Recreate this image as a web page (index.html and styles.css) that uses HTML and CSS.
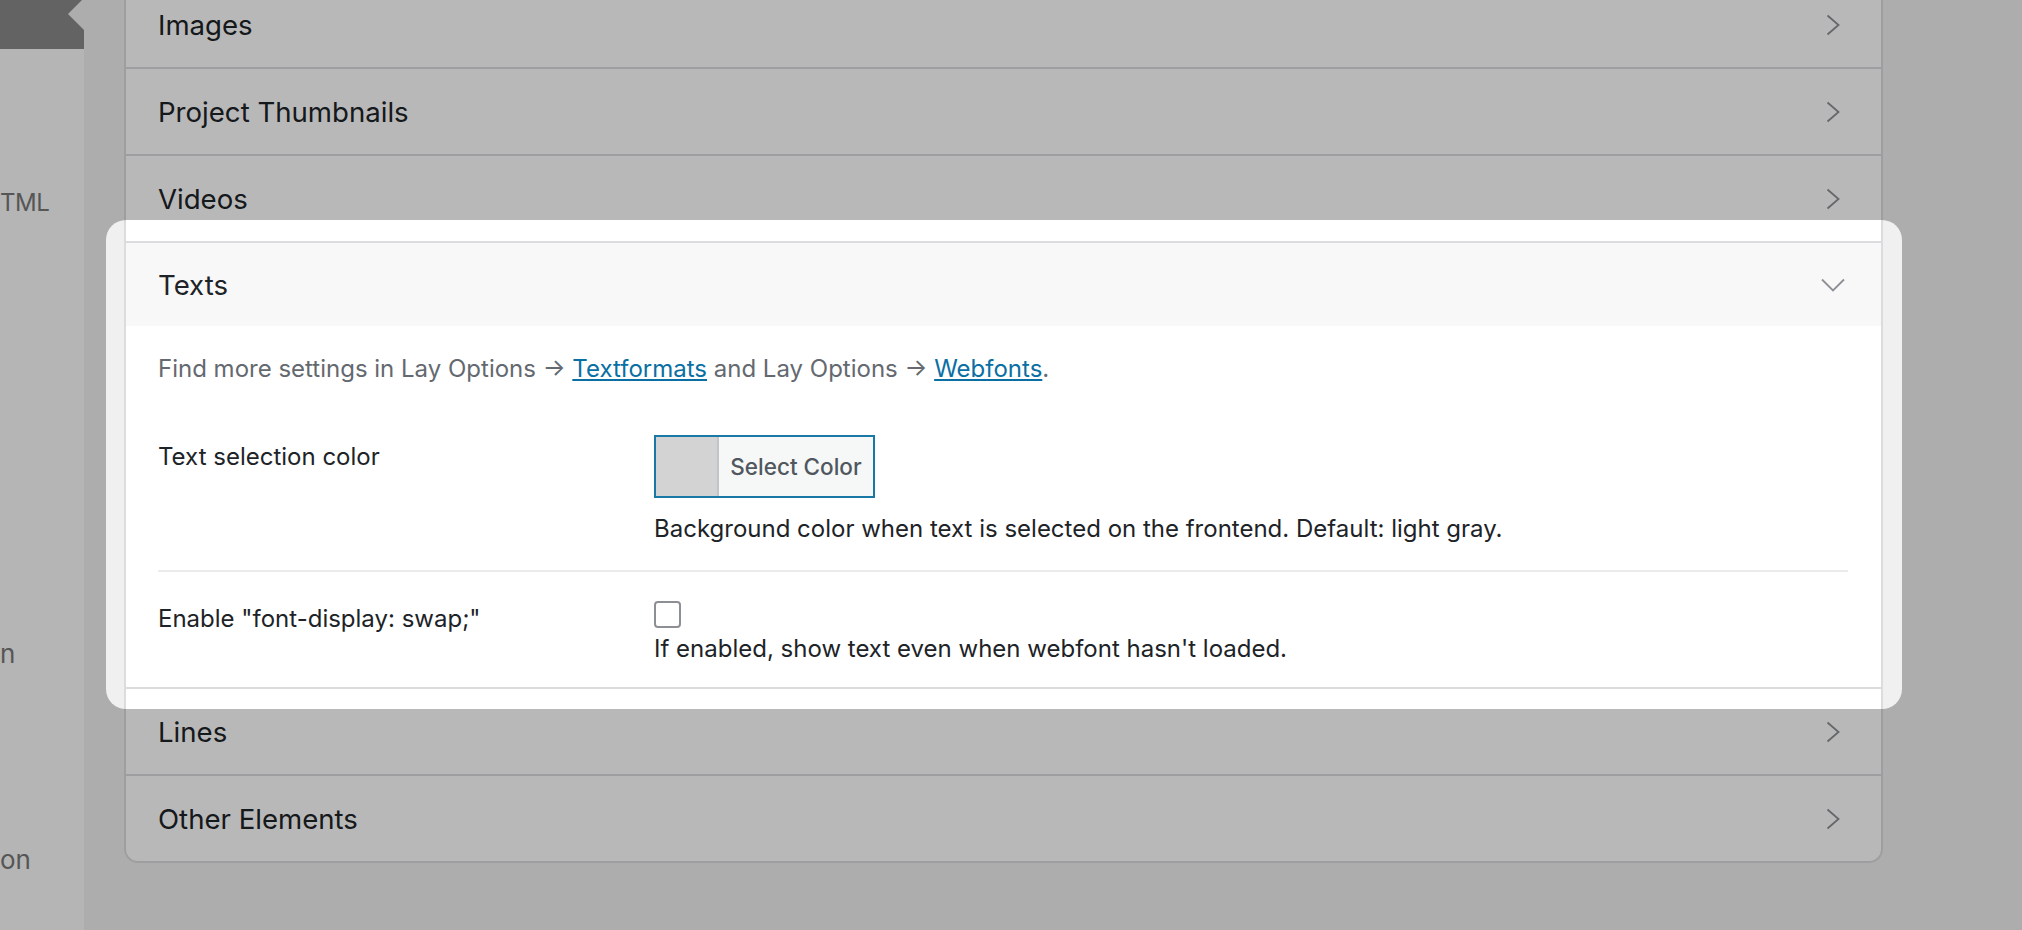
FILE: index.html
```html
<!DOCTYPE html>
<html lang="en">
<head>
    <meta charset="UTF-8">
    <meta name="viewport" content="width=device-width, initial-scale=1.0">
    <title>Lay Options</title>
    <link rel="stylesheet" href="styles.css">
</head>
<body>

    <div class="layout">
        <!-- Admin side menu (scrolled partly out of view) -->
        <aside class="sidebar">
            <div class="menu-current"></div>
            <ul class="menu">
                <li class="menu-item item-html">TML</li>
                <li class="menu-item item-design">n</li>
                <li class="menu-item item-option">on</li>
            </ul>
        </aside>

        <main class="main">
            <div class="card">
                <section class="panel">
                    <header class="panel-head">
                        <span>Images</span>
                        <svg class="chevron" viewBox="0 0 24 24"><path d="M6.5 2.5 L17.5 12 L6.5 21.5"/></svg>
                    </header>
                </section>
                <section class="panel">
                    <header class="panel-head">
                        <span>Project Thumbnails</span>
                        <svg class="chevron" viewBox="0 0 24 24"><path d="M6.5 2.5 L17.5 12 L6.5 21.5"/></svg>
                    </header>
                </section>
                <section class="panel">
                    <header class="panel-head">
                        <span>Videos</span>
                        <svg class="chevron" viewBox="0 0 24 24"><path d="M6.5 2.5 L17.5 12 L6.5 21.5"/></svg>
                    </header>
                </section>

                <!-- Open panel -->
                <section class="panel is-open">
                    <header class="panel-head">
                        <span>Texts</span>
                        <svg class="chevron" viewBox="0 0 24 24"><path d="M1 6.5 L12 17.5 L23 6.5"/></svg>
                    </header>
                    <div class="panel-body">
                        <p class="panel-note">Find more settings in Lay Options → <a href="#">Textformats</a> and Lay Options → <a href="#">Webfonts</a>.</p>

                        <div class="field">
                            <label class="field-label">Text selection color</label>
                            <div class="field-value">
                                <button type="button" class="color-button">
                                    <span class="color-swatch"></span>
                                    <span class="color-text">Select Color</span>
                                </button>
                                <p class="field-desc">Background color when text is selected on the frontend. Default: light gray.</p>
                            </div>
                        </div>

                        <div class="field">
                            <label class="field-label" for="fontSwap">Enable "font-display: swap;"</label>
                            <div class="field-value">
                                <input type="checkbox" id="fontSwap" class="checkbox">
                                <p class="field-desc field-desc-tight">If enabled, show text even when webfont hasn't loaded.</p>
                            </div>
                        </div>
                    </div>
                </section>

                <section class="panel">
                    <header class="panel-head">
                        <span>Lines</span>
                        <svg class="chevron" viewBox="0 0 24 24"><path d="M6.5 2.5 L17.5 12 L6.5 21.5"/></svg>
                    </header>
                </section>
                <section class="panel">
                    <header class="panel-head">
                        <span>Other Elements</span>
                        <svg class="chevron" viewBox="0 0 24 24"><path d="M6.5 2.5 L17.5 12 L6.5 21.5"/></svg>
                    </header>
                </section>
            </div>
        </main>
    </div>

    <!-- Tour highlight: dims everything except the open panel -->
    <div class="spotlight"></div>

</body>
</html>
```

FILE: styles.css
```css
/* Lay Options - settings page with tour highlight */
body {
    font-family: Inter, "Noto Sans", Arial, sans-serif;
    background-color: #f0f0f1;
    margin: 0;
    padding: 0;
    height: 930px;
    overflow: hidden;
    color: #1d2327;
}

.layout {
    display: flex;
    height: 100%;
}

/* Side menu */
.sidebar {
    width: 84px;
    flex-shrink: 0;
    background-color: #fbfbfb;
    overflow: hidden;
}

.menu-current {
    position: relative;
    height: 49px;
    background-color: #8a8a8a;
}

.menu-current::after {
    content: "";
    position: absolute;
    right: 0;
    top: -2px;
    border-top: 16px solid transparent;
    border-bottom: 16px solid transparent;
    border-right: 16px solid #f0f0f1;
}

.menu {
    list-style: none;
    margin: 0;
    padding: 0;
}

.menu-item {
    font-size: 26px;
    line-height: 40px;
    color: #787878;
    white-space: nowrap;
}

.item-html {
    margin-top: 134px;
    font-size: 24px;
    letter-spacing: -0.5px;
}

.item-design {
    margin-top: 411px;
}

.item-option {
    margin-top: 166px;
}

/* Main column */
.main {
    flex: 1;
    padding-left: 40px;
}

.card {
    width: 1759px;
    box-sizing: border-box;
    margin-top: -20px;
    background-color: #fff;
    border: 2px solid #dcdcde;
    border-radius: 14px;
    overflow: hidden;
}

.panel + .panel {
    border-top: 2px solid #dcdcde;
}

.panel-head {
    height: 85px;
    padding: 0 36px 0 32px;
    display: flex;
    align-items: center;
    justify-content: space-between;
    font-size: 27.6px;
    color: #1d2327;
}

.is-open .panel-head {
    height: 83px;
    background-color: #f8f8f8;
}

.chevron {
    width: 24px;
    height: 24px;
    fill: none;
    stroke: #8c8f94;
    stroke-width: 1.8;
}

.panel-body {
    padding: 25px 33px 0 32px;
}

.panel-note {
    margin: 0 0 18px;
    font-size: 24px;
    line-height: 36px;
    color: #646970;
}

.panel-note a {
    color: #0a6fa3;
}

/* Settings rows */
.field {
    display: grid;
    grid-template-columns: 496px 1fr;
    padding: 30px 0 23px;
    border-bottom: 2px solid #ebebeb;
}

.field:last-child {
    padding: 29px 0 20px;
    border-bottom: none;
}

.field-label {
    font-size: 24px;
    line-height: 36px;
    color: #1d2327;
}

.field:first-of-type .field-label {
    padding-top: 4px;
}

.field-value {
    display: flex;
    flex-direction: column;
    align-items: flex-start;
}

.field-desc {
    margin: 13px 0 0;
    font-size: 24px;
    line-height: 36px;
    color: #1d2327;
}

.field-desc-tight {
    margin-top: 3px;
}

.color-button {
    display: flex;
    align-items: stretch;
    width: 221px;
    height: 63px;
    padding: 0;
    background-color: #f6f7f7;
    border: 2px solid #1a78a6;
    border-radius: 0;
    font-family: inherit;
    cursor: pointer;
}

.color-swatch {
    width: 61px;
    background-color: #d3d3d3;
    border-right: 2px solid #c3c4c7;
}

.color-text {
    flex: 1;
    display: flex;
    align-items: center;
    justify-content: center;
    font-size: 22.5px;
    font-weight: 500;
    color: #50575e;
}

.checkbox {
    appearance: none;
    width: 27px;
    height: 27px;
    margin: 0;
    background-color: #fff;
    border: 2px solid #8c8f94;
    border-radius: 4px;
}

/* Tour highlight */
.spotlight {
    position: absolute;
    left: 106px;
    top: 220px;
    width: 1796px;
    height: 489px;
    border-radius: 20px;
    box-shadow: 0 0 0 3000px rgba(0, 0, 0, 0.28);
    pointer-events: none;
}
```
